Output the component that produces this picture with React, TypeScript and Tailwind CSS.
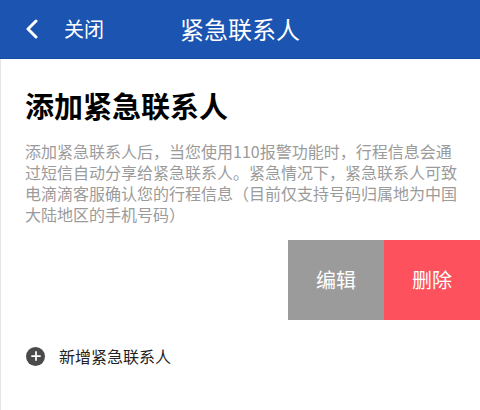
import { Plus } from 'lucide-react';

const font = { fontFamily: '"Noto Sans CJK SC", "Noto Sans", sans-serif' };

export default function App() {
  return (
    <div className="w-[480px] h-[410px] bg-white overflow-hidden" style={font}>
      {/* 顶部导航 */}
      <div className="relative h-[59px] bg-[#1c54b2] flex items-center text-white border-b border-[#184a9e]">
        <div className="flex items-center pl-[24px] gap-[24px]">
          <svg width="16" height="20" viewBox="0 0 16 20" fill="none">
            <path d="M12 2 L4 10 L12 18" stroke="white" strokeWidth="3" strokeLinecap="round" strokeLinejoin="round" />
          </svg>
          <span className="text-[20px] leading-none">关闭</span>
        </div>
        <span className="absolute left-0 right-0 text-center text-[24px] leading-none pointer-events-none">
          紧急联系人
        </span>
      </div>

      {/* 内容 */}
      <div className="border-l border-[#e5e5e5] h-[351px]">
        <h1 className="pl-[24px] pt-[28px] text-[29px] leading-[36px] font-bold text-black">
          添加紧急联系人
        </h1>
        <p className="mt-[18px] pl-[24px] w-[458px] text-[16px] leading-[21px] text-[#9b9b9b]">
          添加紧急联系人后，当您使用110报警功能时，行程信息会通过短信自动分享给紧急联系人。紧急情况下，紧急联系人可致电滴滴客服确认您的行程信息（目前仅支持号码归属地为中国大陆地区的手机号码）
        </p>

        <div className="mt-[15px] flex justify-end">
          <div className="w-[96px] h-[80px] bg-[#9b9b9b] flex items-center justify-center text-white text-[20px]">
            编辑
          </div>
          <div className="w-[96px] h-[80px] bg-[#fd515d] flex items-center justify-center text-white text-[20px]">
            删除
          </div>
        </div>

        <div className="mt-[24px] pl-[25px] flex items-center gap-[14px] h-[24px]">
          <span className="w-[19px] h-[19px] rounded-full bg-[#4a4a4a] flex items-center justify-center">
            <Plus size={14} strokeWidth={3} className="text-white" />
          </span>
          <span className="text-[16px] text-[#222]">新增紧急联系人</span>
        </div>
      </div>
    </div>
  );
}
